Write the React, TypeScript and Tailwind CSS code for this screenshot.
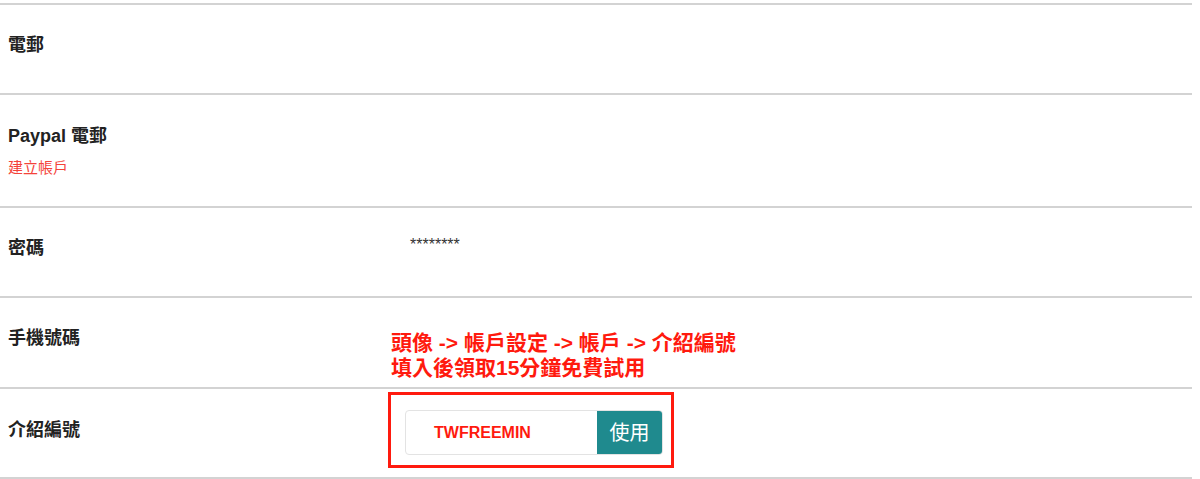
import React from "react";

const font = { fontFamily: '"Liberation Sans", "Noto Sans CJK TC", sans-serif' };

const Label = ({ children }: { children: React.ReactNode }) => (
  <div className="text-[18px] leading-[26px] font-bold text-[#222]">{children}</div>
);

const App = () => {
  return (
    <div className="w-[1200px] h-[479px] bg-white pt-[3px] overflow-hidden" style={font}>
      <div className="w-[1192px] border-b-2 border-[#d3d3d3]">
        {/* 電郵 */}
        <div className="flex h-[90px] border-t-2 border-[#d3d3d3]">
          <div className="w-[388px] pl-2 pt-[27px]">
            <Label>電郵</Label>
          </div>
          <div className="flex-1" />
        </div>
        {/* paypal */}
        <div className="flex h-[113px] border-t-2 border-[#d3d3d3]">
          <div className="w-[388px] pl-2 pt-[28px]">
            <Label>Paypal 電郵</Label>
            <div className="mt-[8px] text-[15px] leading-[22px] text-[#f4433a]">建立帳戶</div>
          </div>
          <div className="flex-1" />
        </div>
        {/* password */}
        <div className="flex h-[90px] border-t-2 border-[#d3d3d3]">
          <div className="w-[388px] pl-2 pt-[27px]">
            <Label>密碼</Label>
          </div>
          <div className="flex-1 pl-[22px] pt-[27px] text-[16px] leading-[20px] text-[#333]">********</div>
        </div>
        {/* phone */}
        <div className="flex h-[91px] border-t-2 border-[#d3d3d3]">
          <div className="w-[388px] pl-2 pt-[27px]">
            <Label>手機號碼</Label>
          </div>
          <div className="flex-1 pl-[3px] pt-[32px] text-[21px] leading-[25px] font-bold text-[#ff1a0e]">
            <div>頭像 -&gt; 帳戶設定 -&gt; 帳戶 -&gt; 介紹編號</div>
            <div>填入後領取15分鐘免費試用</div>
          </div>
        </div>
        {/* referral */}
        <div className="flex h-[90px] border-t-2 border-[#d3d3d3]">
          <div className="w-[388px] pl-2 pt-[28px]">
            <Label>介紹編號</Label>
          </div>
          <div className="flex-1 pt-[3px]">
            <div className="w-[286px] h-[76px] border-[3px] border-[#ff1a0e] pl-[14px] pt-[15px]">
              <div className="flex w-[258px] h-[45px] rounded-[4px] border border-[#e3e3e3] overflow-hidden">
                <div className="flex-1 flex items-center pl-[28px] text-[16px] font-bold text-[#ff1a0e]">TWFREEMIN</div>
                <button className="w-[65px] h-full bg-[#1f8a8e] text-white text-[20px] flex items-center justify-center">
                  使用
                </button>
              </div>
            </div>
          </div>
        </div>
      </div>
    </div>
  );
};

export default App;
